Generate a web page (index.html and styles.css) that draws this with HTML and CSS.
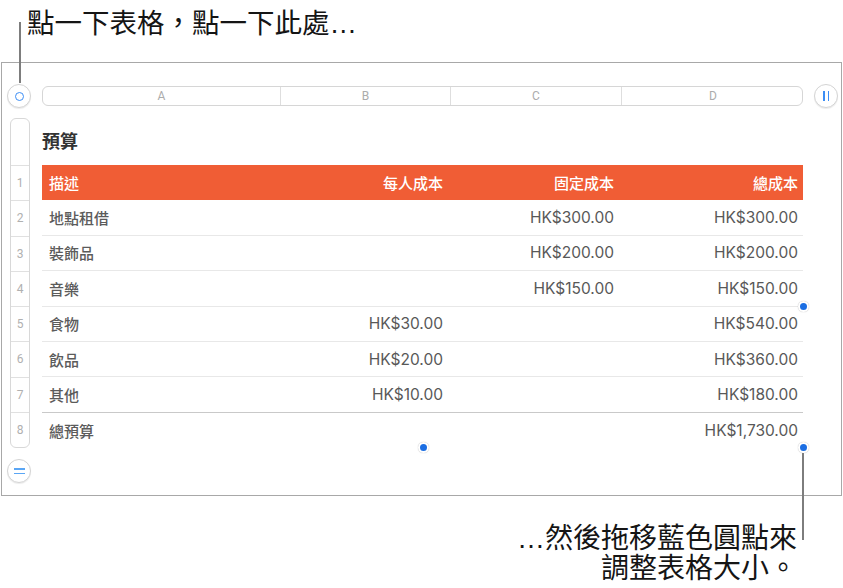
FILE: index.html
```html
<!DOCTYPE html>
<html lang="zh-Hant">
<head>
<meta charset="utf-8">
<title>預算</title>
<link rel="stylesheet" href="styles.css">
</head>
<body>
<div class="page">
  <div class="hint-top">點一下表格，點一下此處<span class="ell">…</span></div>
  <div class="frame">
    <div class="toolbar">
      <div class="round-btn"><span class="ring"></span></div>
      <div class="col-bar">
        <div class="col-cell">A</div>
        <div class="col-cell">B</div>
        <div class="col-cell">C</div>
        <div class="col-cell">D</div>
      </div>
      <div class="round-btn"><span class="bars"><i></i><i></i></span></div>
    </div>
    <div class="sheet">
      <div class="row-heads">
        <div class="rh rh-top"></div>
        <div class="rh">1</div>
        <div class="rh">2</div>
        <div class="rh">3</div>
        <div class="rh">4</div>
        <div class="rh">5</div>
        <div class="rh">6</div>
        <div class="rh">7</div>
        <div class="rh">8</div>
      </div>
      <div class="table-area">
        <div class="title">預算</div>
        <div class="table">
          <div class="row head">
            <div class="cell left">描述</div>
            <div class="cell">每人成本</div>
            <div class="cell">固定成本</div>
            <div class="cell last">總成本</div>
          </div>
          <div class="row">
            <div class="cell left">地點租借</div>
            <div class="cell"></div>
            <div class="cell num">HK$300.00</div>
            <div class="cell num last">HK$300.00</div>
          </div>
          <div class="row">
            <div class="cell left">裝飾品</div>
            <div class="cell"></div>
            <div class="cell num">HK$200.00</div>
            <div class="cell num last">HK$200.00</div>
          </div>
          <div class="row">
            <div class="cell left">音樂</div>
            <div class="cell"></div>
            <div class="cell num">HK$150.00</div>
            <div class="cell num last">HK$150.00</div>
          </div>
          <div class="row">
            <div class="cell left">食物</div>
            <div class="cell num">HK$30.00</div>
            <div class="cell"></div>
            <div class="cell num last">HK$540.00</div>
          </div>
          <div class="row">
            <div class="cell left">飲品</div>
            <div class="cell num">HK$20.00</div>
            <div class="cell"></div>
            <div class="cell num last">HK$360.00</div>
          </div>
          <div class="row pre-foot">
            <div class="cell left">其他</div>
            <div class="cell num">HK$10.00</div>
            <div class="cell"></div>
            <div class="cell num last">HK$180.00</div>
          </div>
          <div class="row foot">
            <div class="cell left">總預算</div>
            <div class="cell"></div>
            <div class="cell"></div>
            <div class="cell num last">HK$1,730.00</div>
          </div>
        </div>
      </div>
    </div>
    <div class="bottom-tools">
      <div class="round-btn"><span class="eq"><i></i><i></i></span></div>
    </div>
    <span class="dot dot-right"></span>
    <span class="dot dot-bottom"></span>
    <span class="dot dot-corner"></span>
  </div>
  <div class="hint-bottom">
    <div class="hint-line"><span class="ell">…</span>然後拖移藍色圓點來</div>
    <div class="hint-line">調整表格大小。</div>
  </div>
  <span class="leader leader-top"></span>
  <span class="leader leader-bottom"></span>
</div>
</body>
</html>
```
FILE: styles.css
```css
* { box-sizing: border-box; }
html, body { margin: 0; padding: 0; background: #fff; }
body {
  font-family: Roboto, "Noto Sans CJK TC", sans-serif;
  color: #5b5b5b;
}
.page {
  position: relative;
  width: 843px;
  height: 588px;
  overflow: hidden;
}
.hint-top {
  height: 62px;
  padding: 6px 0 0 27px;
  font-family: "Noto Sans CJK TC", sans-serif;
  font-size: 27.5px;
  line-height: 30px;
  color: #151515;
  white-space: nowrap;
}
.ell {
  font-family: "Liberation Sans", sans-serif;
}
.frame {
  position: relative;
  margin-left: 1px;
  width: 841px;
  border: 1px solid #a8a8a8;
  padding: 21px 0 12px 0;
}
.toolbar {
  display: flex;
  align-items: center;
  gap: 11px;
  padding-left: 5px;
  height: 24px;
}
.round-btn {
  width: 24px;
  height: 24px;
  border-radius: 50%;
  border: 1px solid #d4d4d4;
  background: #fff;
  box-shadow: 0 1px 1px rgba(0,0,0,0.08);
  display: flex;
  align-items: center;
  justify-content: center;
  flex: none;
}
.ring {
  width: 9px;
  height: 9px;
  border-radius: 50%;
  border: 1.5px solid #3d8ef5;
}
.bars { display: flex; gap: 3px; }
.bars i { display: block; width: 1.5px; height: 10px; background: #3d8ef5; }
.eq { display: flex; flex-direction: column; gap: 3px; }
.eq i { display: block; width: 11px; height: 1.5px; background: #5aa6f5; }
.col-bar {
  display: grid;
  grid-template-columns: 237px 170px 171px 183px;
  width: 761px;
  height: 20px;
  border: 1px solid #d6d6d6;
  border-radius: 6px;
  overflow: hidden;
}
.col-cell {
  border-left: 1px solid #dedede;
  display: flex;
  align-items: center;
  justify-content: center;
  font-size: 12px;
  color: #acacac;
}
.col-cell:first-child { border-left: none; }
.sheet {
  display: flex;
  gap: 12px;
  margin-top: 10px;
  padding-left: 8px;
}
.row-heads {
  width: 20px;
  height: 330px;
  border: 1px solid #d8d8d8;
  border-radius: 6px;
  display: flex;
  flex-direction: column;
  overflow: hidden;
}
.rh {
  flex: 1;
  border-top: 1px solid #e0e0e0;
  display: flex;
  align-items: center;
  justify-content: center;
  font-size: 12px;
  color: #b0b0b0;
}
.rh-top { flex: none; height: 46px; border-top: none; }
.table-area { width: 761px; }
.title {
  height: 47px;
  display: flex;
  align-items: center;
  padding-bottom: 3px;
  font-family: "Noto Sans CJK TC", sans-serif;
  font-size: 18px;
  font-weight: 700;
  color: #333;
}
.row {
  display: grid;
  grid-template-columns: 237px 170px 171px 183px;
  height: 35.375px;
  border-bottom: 1px solid #e8e8e8;
}
.row.head { background: #f05d35; border-bottom: none; color: #fff; }
.row.pre-foot { border-bottom-color: #c9c9c9; }
.row.foot { border-bottom: none; }
.cell {
  display: flex;
  align-items: center;
  justify-content: flex-end;
  padding-right: 6px;
  font-size: 15px;
  font-weight: 500;
  white-space: nowrap;
}
.cell.num {
  font-family: Inter, Roboto, sans-serif;
  font-size: 15.5px;
  font-weight: 400;
  color: #585858;
}
.cell.left { justify-content: flex-start; padding-left: 7px; }
.cell.last { padding-right: 5px; }
.bottom-tools {
  margin-top: 11px;
  padding-left: 5px;
}
.dot {
  position: absolute;
  width: 11px;
  height: 11px;
  border-radius: 50%;
  background: #1a6de2;
  border: 2px solid #fff;
  box-shadow: 0 0 1px rgba(0,0,0,0.35);
}
.dot-right { left: 795.5px; top: 237.5px; }
.dot-bottom { left: 415.5px; top: 378.5px; }
.dot-corner { left: 795.5px; top: 378.5px; }
.hint-bottom {
  margin-top: 25px;
  padding-right: 46px;
  text-align: right;
  font-family: "Noto Sans CJK TC", sans-serif;
  font-size: 28px;
  color: #151515;
}
.hint-line { height: 30px; line-height: 30px; white-space: nowrap; }
.leader {
  position: absolute;
  width: 2px;
  background: #7d7d7d;
}
.leader-top { left: 18.5px; top: 22px; height: 61px; }
.leader-bottom { left: 802px; top: 453px; height: 87px; }
```
